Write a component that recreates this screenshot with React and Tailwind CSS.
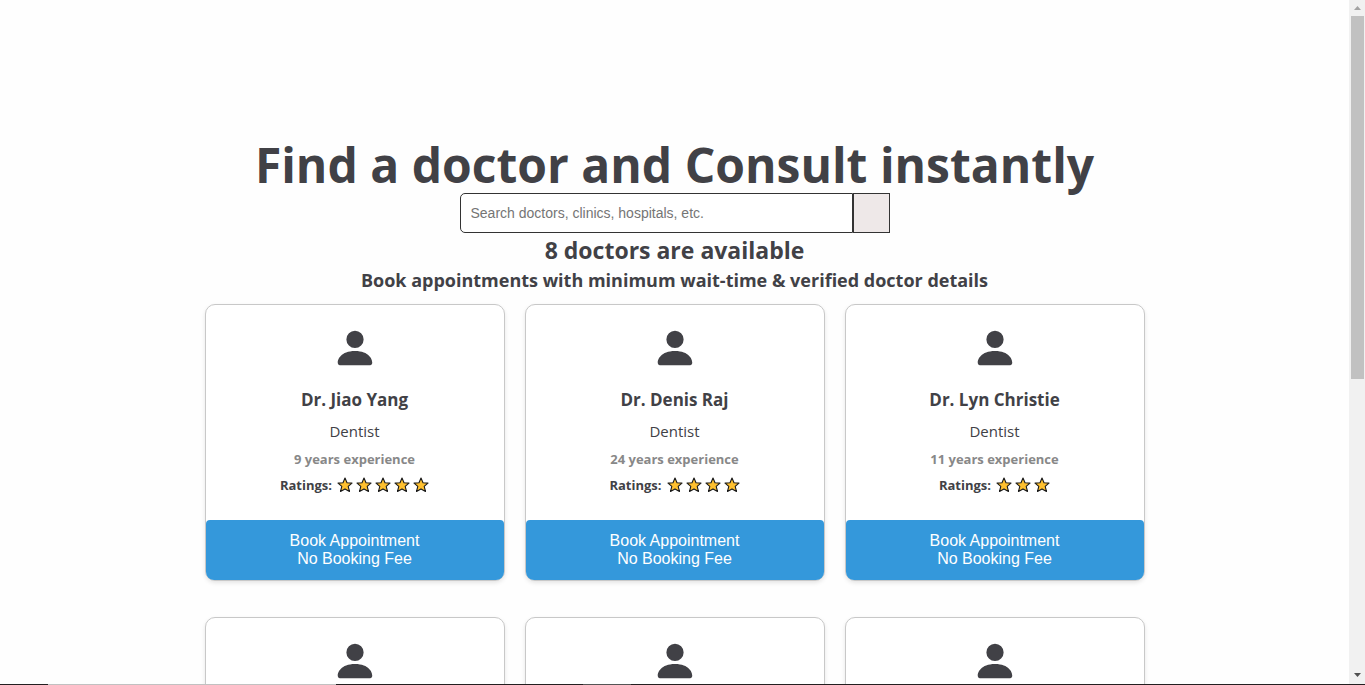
import { BsPersonFill } from "react-icons/bs";

const doctors = [
  { id: 1, name: "Dr. Jiao Yang", speciality: "Dentist", years: 9, rating: 5 },
  { id: 2, name: "Dr. Denis Raj", speciality: "Dentist", years: 24, rating: 4 },
  { id: 3, name: "Dr. Lyn Christie", speciality: "Dentist", years: 11, rating: 3 },
  { id: 4 },
  { id: 5 },
  { id: 6 },
];

function Star() {
  return (
    <svg viewBox="0 0 16 16" className="size-4" aria-hidden="true">
      <path
        d="M8 1 10 5.700 15 6.100 11.200 9.400 12.500 14.500 8 11.900 3.500 14.500 4.800 9.400 1 6.100 6 5.700Z"
        fill="#ffc02e"
        stroke="#1a1a1a"
        strokeWidth="1.1"
        strokeLinejoin="round"
      />
    </svg>
  );
}

function DoctorCard({ doctor }) {
  return (
    <article className="flex h-[277px] w-[300px] flex-col items-center rounded-[10px] border border-[#c8c8c8] bg-white shadow-[0_2px_4px_rgba(0,0,0,0.1)]">
      <BsPersonFill className="mt-5 size-[46px] shrink-0" aria-hidden="true" />
      {doctor.name && (
        <>
          <h4 className="mt-[17px] text-[17px] leading-6 font-bold">{doctor.name}</h4>
          <p className="mt-[7px] text-[15px] leading-6">{doctor.speciality}</p>
          <p className="mt-1 text-[13px] leading-6 font-bold text-[#888]">
            {doctor.years} years experience
          </p>
          <p className="mt-0.5 flex items-center text-[13px] leading-6 font-bold">
            Ratings:
            <span className="ml-[5px] flex gap-[3px]" role="img" aria-label={`${doctor.rating} stars`}>
              {Array.from({ length: doctor.rating }, (_, i) => (
                <Star key={i} />
              ))}
            </span>
          </p>
          <button
            type="button"
            className="mt-auto w-full rounded-t-[4px] rounded-b-[8px] bg-[#3498db] py-3 font-['Liberation_Sans',Arial,sans-serif] text-base leading-[18px] text-white"
          >
            <span className="block">Book Appointment</span>
            <span className="block">No Booking Fee</span>
          </button>
        </>
      )}
    </article>
  );
}

function ScrollTrack() {
  return (
    <div className="flex w-4 shrink-0 flex-col items-center bg-[#f1f1f1]" aria-hidden="true">
      <svg viewBox="0 0 16 16" className="size-4 shrink-0">
        <path d="M5 10h7L8.500 6Z" fill="#a3a3a3" />
      </svg>
      <div className="ml-px h-[53%] w-[13px] bg-[#c1c1c1]" />
      <svg viewBox="0 0 16 16" className="mt-auto size-4 shrink-0">
        <path d="M5 5h7L8.500 9Z" fill="#505050" />
      </svg>
    </div>
  );
}

export default function App() {
  return (
    <div className="flex h-screen flex-col bg-[#fefefe] font-['Open_Sans','Noto_Sans',sans-serif] text-[#414146]">
      <div className="flex min-h-0 flex-1">
        <main className="flex min-w-0 flex-1 flex-col items-center overflow-hidden pt-[137px]">
          <h1 className="text-5xl leading-[56px] font-bold">Find a doctor and Consult instantly</h1>
          <form className="flex h-10 w-[430px] shrink-0" role="search">
            <input
              type="text"
              aria-label="Search doctors"
              placeholder="Search doctors, clinics, hospitals, etc."
              className="min-w-0 flex-1 rounded-l-[5px] border border-[#333] bg-white px-[10px] font-['Liberation_Sans',Arial,sans-serif] text-sm placeholder:text-[#757575]"
            />
            <button type="button" aria-label="Search" className="w-[37px] border border-[#333] bg-[#eee8e8]" />
          </form>
          <h2 className="text-[23px] leading-[34px] font-bold">8 doctors are available</h2>
          <h3 className="text-lg leading-[26px] font-bold">
            Book appointments with minimum wait-time &amp; verified doctor details
          </h3>
          <section className="mt-[11px] flex w-full max-w-[960px] flex-wrap justify-center gap-x-5 gap-y-9">
            {doctors.map((doctor) => (
              <DoctorCard key={doctor.id} doctor={doctor} />
            ))}
          </section>
        </main>
        <ScrollTrack />
      </div>
      <div className="flex h-px shrink-0 bg-[#231f20]" aria-hidden="true">
        <div className="ml-12 w-72 bg-[#c1c1c1]" />
        <div className="ml-[247px] w-12 bg-[#555]" />
      </div>
    </div>
  );
}
